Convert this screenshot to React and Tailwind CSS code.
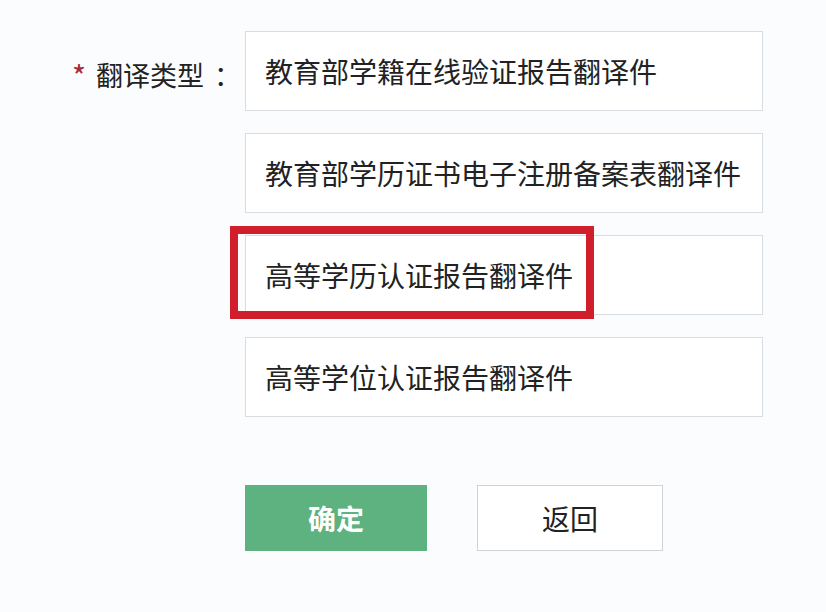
const options = [
  "教育部学籍在线验证报告翻译件",
  "教育部学历证书电子注册备案表翻译件",
  "高等学历认证报告翻译件",
  "高等学位认证报告翻译件",
];

function App() {
  return (
    <div
      className="w-[826px] h-[612px] bg-[#fbfcfe] text-[#222]"
      style={{ fontFamily: '"Noto Sans CJK SC", "Noto Sans", sans-serif' }}
    >
      <div className="flex pt-[31px]">
        <div className="w-[245px] pl-[72px] h-[80px] flex items-center text-[27px] pt-[8px]">
          <span className="text-[#a3293d] mr-[10px] text-[30px] leading-none">*</span>
          <span>翻译类型</span>
          <span className="ml-[10px]">：</span>
        </div>

        <div className="w-[518px] flex flex-col gap-[22px]">
          {options.map((item, i) => (
            <div
              key={item}
              className="relative h-[80px] bg-white border border-[#d9dde2] flex items-center pl-[19px] text-[28px]"
            >
              {item}
              {i === 2 && (
                <div className="absolute left-[-16px] top-[-10px] w-[364px] h-[93px] border-[8px] border-[#d01f2b]" />
              )}
            </div>
          ))}

          <div className="flex gap-[50px] mt-[46px]">
            <button className="w-[182px] h-[66px] bg-[#5db280] text-white text-[28px] font-bold">
              确定
            </button>
            <button className="w-[186px] h-[66px] bg-white border border-[#cfd3d8] text-[28px] text-[#222]">
              返回
            </button>
          </div>
        </div>
      </div>
    </div>
  );
}

export default App;
